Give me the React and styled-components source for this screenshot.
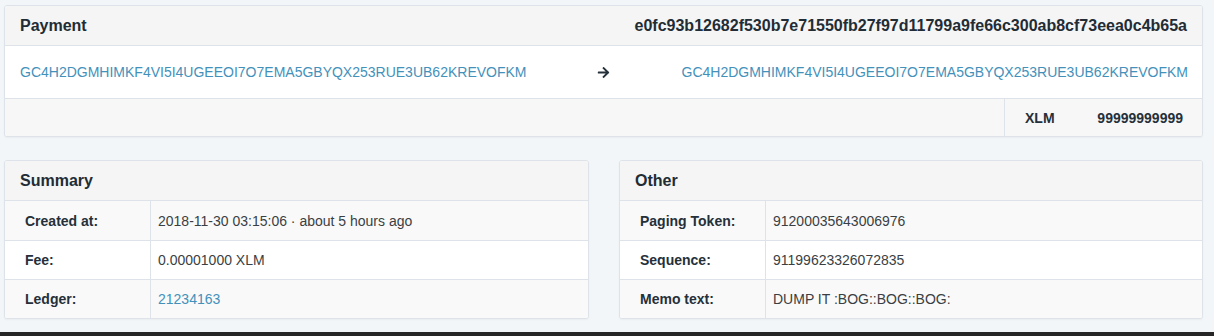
import React from 'react';
import styled, { createGlobalStyle } from 'styled-components';
import { FaArrowRight } from 'react-icons/fa';

const GlobalStyle = createGlobalStyle`
  html, body {
    margin: 0;
    padding: 0;
    height: 100%;
    background: #f3f6f9;
  }
  body {
    font-family: 'Liberation Sans', Arial, sans-serif;
    font-size: 14px;
    color: #2b3035;
  }
  #root {
    height: 100%;
  }
`;

const Page = styled.div`
  box-sizing: border-box;
  min-height: 100%;
  display: flex;
  flex-direction: column;
  padding: 5px 11px 0 4px;
`;

const Card = styled.div`
  box-sizing: border-box;
  background: #fff;
  border: 1px solid #dde3e8;
  border-radius: 3px;
  box-shadow: 0 1px 2px rgba(0, 0, 0, 0.04);
  overflow: hidden;
`;

const CardHeader = styled.div`
  box-sizing: border-box;
  height: 40px;
  display: flex;
  align-items: center;
  justify-content: space-between;
  padding: 0 15px;
  background: #f5f5f5;
  border-bottom: 1px solid #dde3e8;
  font-size: 16px;
  font-weight: bold;
  color: #222c35;
`;

const Link = styled.a`
  color: #4391bb;
  text-decoration: none;
  cursor: pointer;
`;

const TransferRow = styled.div`
  box-sizing: border-box;
  height: 53px;
  display: grid;
  grid-template-columns: 1fr auto 1fr;
  align-items: center;
  padding: 0 14px 0 15px;
  border-bottom: 1px solid #dde3e8;
`;

const Arrow = styled.span`
  display: flex;
  color: #25313b;
  font-size: 13px;
  margin-left: -1px;
`;

const ToAccount = styled(Link)`
  justify-self: end;
`;

const AmountRow = styled.div`
  height: 37px;
  display: flex;
  justify-content: flex-end;
  background: #f7f7f7;
`;

const AmountCell = styled.div`
  box-sizing: border-box;
  width: 198px;
  display: flex;
  align-items: center;
  justify-content: space-between;
  padding: 0 19px 0 20px;
  border-left: 1px solid #dde3e8;
  font-weight: bold;
  color: #25303a;
`;

const Columns = styled.div`
  display: grid;
  grid-template-columns: 585px 584px;
  justify-content: space-between;
  margin-top: 23px;
`;

const Table = styled.div`
  display: grid;
  grid-template-columns: 146px 1fr;
`;

const Label = styled.div`
  box-sizing: border-box;
  height: 39px;
  display: flex;
  align-items: center;
  padding-left: 20px;
  font-weight: bold;
  color: #25303a;
  background: ${({ striped }) => (striped ? '#f9f9f9' : '#fff')};
  border-right: 1px solid #dde3e8;
  border-top: ${({ first }) => (first ? 'none' : '1px solid #dde3e8')};
`;

const Value = styled.div`
  box-sizing: border-box;
  height: 39px;
  display: flex;
  align-items: center;
  padding-left: 7px;
  color: #3a3f44;
  background: ${({ striped }) => (striped ? '#f9f9f9' : '#fff')};
  border-top: ${({ first }) => (first ? 'none' : '1px solid #dde3e8')};
`;

const BottomBar = styled.div`
  margin: auto -11px 0 -4px;
  height: 4px;
  background: #262626;
`;

const account = 'GC4H2DGMHIMKF4VI5I4UGEEOI7O7EMA5GBYQX253RUE3UB62KREVOFKM';

const summary = [
  ['Created at:', '2018-11-30 03:15:06 · about 5 hours ago'],
  ['Fee:', '0.00001000 XLM'],
  ['Ledger:', <Link key="l">21234163</Link>],
];

const other = [
  ['Paging Token:', '91200035643006976'],
  ['Sequence:', '91199623326072835'],
  ['Memo text:', 'DUMP IT :BOG::BOG::BOG:'],
];

function DetailCard({ title, rows }) {
  return (
    <Card>
      <CardHeader>{title}</CardHeader>
      <Table>
        {rows.map(([label, value], i) => (
          <React.Fragment key={label}>
            <Label striped={i % 2 === 0} first={i === 0}>
              {label}
            </Label>
            <Value striped={i % 2 === 0} first={i === 0}>
              {value}
            </Value>
          </React.Fragment>
        ))}
      </Table>
    </Card>
  );
}

export default function App() {
  return (
    <>
      <GlobalStyle />
      <Page>
        <Card>
          <CardHeader>
            <span>Payment</span>
            <span>e0fc93b12682f530b7e71550fb27f97d11799a9fe66c300ab8cf73eea0c4b65a</span>
          </CardHeader>
          <TransferRow>
            <Link>{account}</Link>
            <Arrow>
              <FaArrowRight />
            </Arrow>
            <ToAccount>{account}</ToAccount>
          </TransferRow>
          <AmountRow>
            <AmountCell>
              <span>XLM</span>
              <span>99999999999</span>
            </AmountCell>
          </AmountRow>
        </Card>
        <Columns>
          <DetailCard title="Summary" rows={summary} />
          <DetailCard title="Other" rows={other} />
        </Columns>
        <BottomBar />
      </Page>
    </>
  );
}
